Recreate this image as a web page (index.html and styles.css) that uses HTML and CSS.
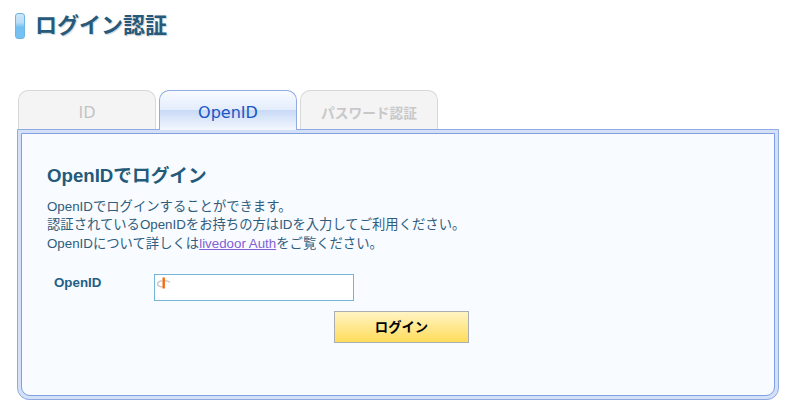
FILE: index.html
```html
<!DOCTYPE html>
<html lang="ja">
<head>
<meta charset="utf-8">
<title>ログイン認証</title>
<link rel="stylesheet" href="styles.css">
</head>
<body>
<h1 class="page-title"><span class="title-mark"></span>ログイン認証</h1>
<div class="tabs">
  <a class="tab">ID</a>
  <a class="tab tab-active">OpenID</a>
  <a class="tab tab-small">パスワード認証</a>
</div>
<div class="panel">
  <div class="panel-inner">
    <h2 class="heading">OpenIDでログイン</h2>
    <p class="intro">OpenIDでログインすることができます。<br>認証されているOpenIDをお持ちの方はIDを入力してご利用ください。<br>OpenIDについて詳しくは<a class="link" href="#">livedoor Auth</a>をご覧ください。</p>
    <form class="form">
      <div class="field">
        <label class="label">OpenID</label>
        <div class="input">
          <svg class="openid-icon" width="16" height="16" viewBox="0 0 16 16"><path d="M7.5 5.8C4.4 6.2 2.6 7.4 2.6 9c0 1.5 1.9 2.7 4.9 3" fill="none" stroke="#c8c8c8" stroke-width="1.4"/><path d="M10 5.7c2 0 3.6.5 5 1.6" fill="none" stroke="#c8c8c8" stroke-width="1.4"/><path d="M8.7 2.5v11" fill="none" stroke="#f96a10" stroke-width="2.4"/></svg>
        </div>
      </div>
      <div class="actions"><button class="button" type="button">ログイン</button></div>
    </form>
  </div>
</div>
</body>
</html>
```
FILE: styles.css
```css
html, body { margin: 0; padding: 0; background: #fff; }
body {
  width: 797px;
  height: 410px;
  overflow: hidden;
  font-family: "Liberation Sans", "Noto Sans CJK JP", sans-serif;
  color: #2f5d7c;
}
.page-title {
  display: flex;
  align-items: center;
  margin: 0;
  padding: 12px 0 0 15px;
  height: 28px;
  font: 700 22px/28px "DejaVu Sans", "Noto Sans CJK JP", sans-serif;
  color: #275a7a;
  text-shadow: 1px 1px 1px rgba(40, 80, 110, .25);
}
.title-mark {
  width: 8px;
  height: 24px;
  margin-right: 10px;
  border: 1px solid #6cb6e4;
  border-radius: 3px;
  background: linear-gradient(#cfe6f6 0, #b9ddf5 35%, #72c0f2 55%, #76c2f3 100%);
}
.tabs {
  display: flex;
  gap: 3px;
  margin: 50px 0 0 18px;
  height: 40px;
  position: relative;
  z-index: 1;
}
.tab {
  box-sizing: border-box;
  width: 138px;
  height: 39px;
  border: 1px solid #d8d8d8;
  border-bottom: 0;
  border-radius: 10px 10px 0 0;
  background: #f4f4f4;
  color: #c4c4c4;
  font: 16px/44px "DejaVu Sans", "Noto Sans CJK JP", sans-serif;
  text-align: center;
}
.tab-small { font-size: 13.7px; font-weight: 700; color: #c8c8c8; }
.tab-active {
  height: 40px;
  border-color: #8fabe2;
  color: #1a56c4;
  background: linear-gradient(#f8fbff 0, #e4edfc 48%, #c9daf6 49%, #f3f7fe 100%);
}
.panel {
  box-sizing: border-box;
  width: 762px;
  height: 271px;
  margin: -1px 0 0 17px;
  padding: 3px;
  border: 1px solid #8fabe2;
  border-radius: 0 0 12px 12px;
  background: #d3e0f8;
}
.panel-inner {
  box-sizing: border-box;
  height: 263px;
  padding: 30px 25px 0;
  border: 1px solid #7fa0e3;
  border-radius: 0 0 9px 9px;
  background: #f8fbff;
}
.heading {
  margin: 0;
  font: 700 18.67px/24px "Liberation Sans", "Noto Sans CJK JP", sans-serif;
  color: #235a7a;
}
.intro {
  margin: 9.6px 0 0;
  font-size: 13.33px;
  line-height: 18.5px;
  color: #2f5d7c;
}
.link { color: #8360d6; }
.form { margin-top: 20.9px; }
.field { display: flex; align-items: flex-start; }
.label {
  width: 100px;
  padding-left: 7px;
  font-size: 13.33px;
  font-weight: 700;
  line-height: 18px;
  color: #235f86;
}
.input {
  box-sizing: border-box;
  width: 200px;
  height: 27px;
  border: 1px solid #74b5d6;
  background: #fff;
  position: relative;
}
.openid-icon { display: block; margin: 0; }
.actions { margin: 10px 0 0 287px; }
.button {
  display: block;
  box-sizing: border-box;
  width: 135px;
  height: 32px;
  padding: 2px 0 0;
  border: 1px solid #a9aeb2;
  background: linear-gradient(#fff4c4 0, #ffe88f 50%, #ffdc5c 100%);
  font: 700 13.33px/28px "Liberation Sans", "Noto Sans CJK JP", sans-serif;
  color: #000;
}
```
